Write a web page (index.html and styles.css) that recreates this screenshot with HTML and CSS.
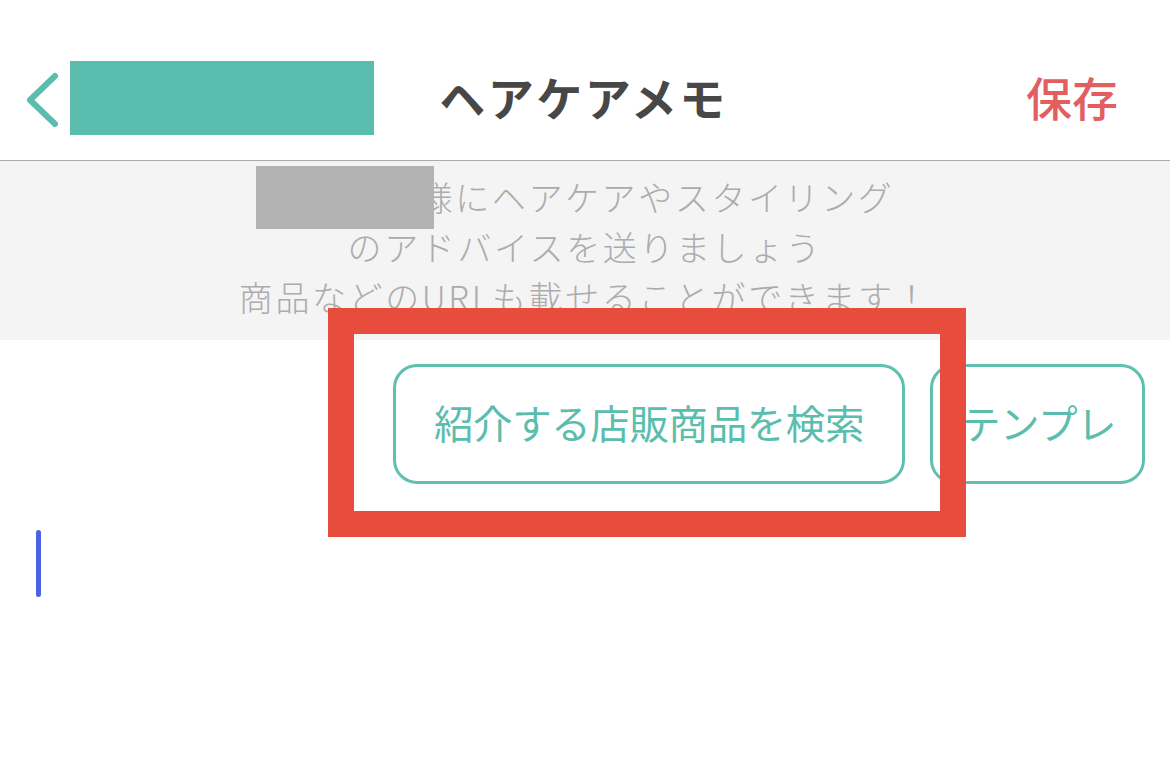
FILE: index.html
```html
<!DOCTYPE html>
<html lang="ja">
<head>
<meta charset="utf-8">
<link rel="stylesheet" href="styles.css">
</head>
<body>
<div class="page">
  <header class="header">
    <div class="left">
      <svg class="back" width="40" height="60" viewBox="0 0 40 60">
        <polyline points="31,8 6,32 31,56" fill="none" stroke="#5bbdad" stroke-width="6" stroke-linecap="round" stroke-linejoin="round"/>
      </svg>
      <div class="name-redact"></div>
    </div>
    <h1 class="title">ヘアケアメモ</h1>
    <div class="save">保存</div>
  </header>
  <section class="info">
    <p class="line first"><span class="redact"></span>様にヘアケアやスタイリング</p>
    <p class="line">のアドバイスを送りましょう</p>
    <p class="line">商品などのURLも載せることができます！</p>
  </section>
  <div class="actions">
    <button class="pill pill-search">紹介する店販商品を検索</button>
    <button class="pill pill-template">テンプレ</button>
  </div>
  <div class="editor">
    <span class="caret"></span>
  </div>
  <div class="highlight"></div>
</div>
</body>
</html>
```
FILE: styles.css
```css
* { box-sizing: border-box; }
html, body {
  margin: 0;
  padding: 0;
  background: #ffffff;
}
body {
  font-family: "Noto Sans CJK JP", "Noto Sans", sans-serif;
  width: 1170px;
  height: 772px;
  overflow: hidden;
}
.page {
  position: relative;
  width: 1170px;
  height: 772px;
}
.header {
  height: 161px;
  border-bottom: 1px solid #ababab;
  display: grid;
  grid-template-columns: 1fr auto 1fr;
  align-items: center;
  padding: 38px 52px 0 24px;
}
.left {
  display: flex;
  align-items: center;
  gap: 6px;
  padding-bottom: 2px;
}
.back { display: block; }
.name-redact {
  width: 304px;
  height: 74px;
  background: #5bbdad;
}
.title {
  margin: 0 0 0 25px;
  font-size: 46px;
  font-weight: 700;
  color: #474747;
  letter-spacing: 2.5px;
  line-height: 1;
  padding-bottom: 6px;
}
.save {
  justify-self: end;
  font-size: 46px;
  color: #e35f5f;
  font-weight: 500;
  line-height: 1;
  padding-bottom: 6px;
}
.info {
  height: 179px;
  background: #f4f4f4;
  padding-top: 11px;
  display: flex;
  flex-direction: column;
  align-items: center;
}
.line {
  margin: 0;
  font-size: 34px;
  font-weight: 300;
  color: #acacac;
  letter-spacing: 2.6px;
  line-height: 50px;
  height: 50px;
  display: flex;
  align-items: center;
  white-space: nowrap;
}
.line.first { transform: translateX(-10px); }
.redact {
  display: inline-block;
  position: relative;
  z-index: 1;
  width: 178px;
  height: 63px;
  margin-right: -15px;
  background: #b3b3b3;
}
.actions {
  display: flex;
  justify-content: flex-end;
  gap: 25px;
  padding: 24px 25px 0 0;
}
.pill {
  height: 120px;
  border: 3px solid #5fc0b0;
  border-radius: 24px;
  background: #ffffff;
  color: #5bbdad;
  font-family: "Noto Sans CJK JP", "Noto Sans", sans-serif;
  font-size: 39.5px;
  font-weight: 400;
  letter-spacing: -0.4px;
  padding: 0;
  display: flex;
  align-items: center;
  justify-content: center;
  padding-bottom: 6px;
}
.pill-search { width: 512px; }
.pill-template { width: 215px; padding-left: 2px; }
.editor {
  padding: 46px 0 0 36px;
}
.caret {
  display: block;
  width: 5px;
  height: 67px;
  border-radius: 3px;
  background: #4a63e2;
}
.highlight {
  position: absolute;
  left: 328px;
  top: 308px;
  width: 638px;
  height: 229px;
  border: 26px solid #e84c3d;
}
```
